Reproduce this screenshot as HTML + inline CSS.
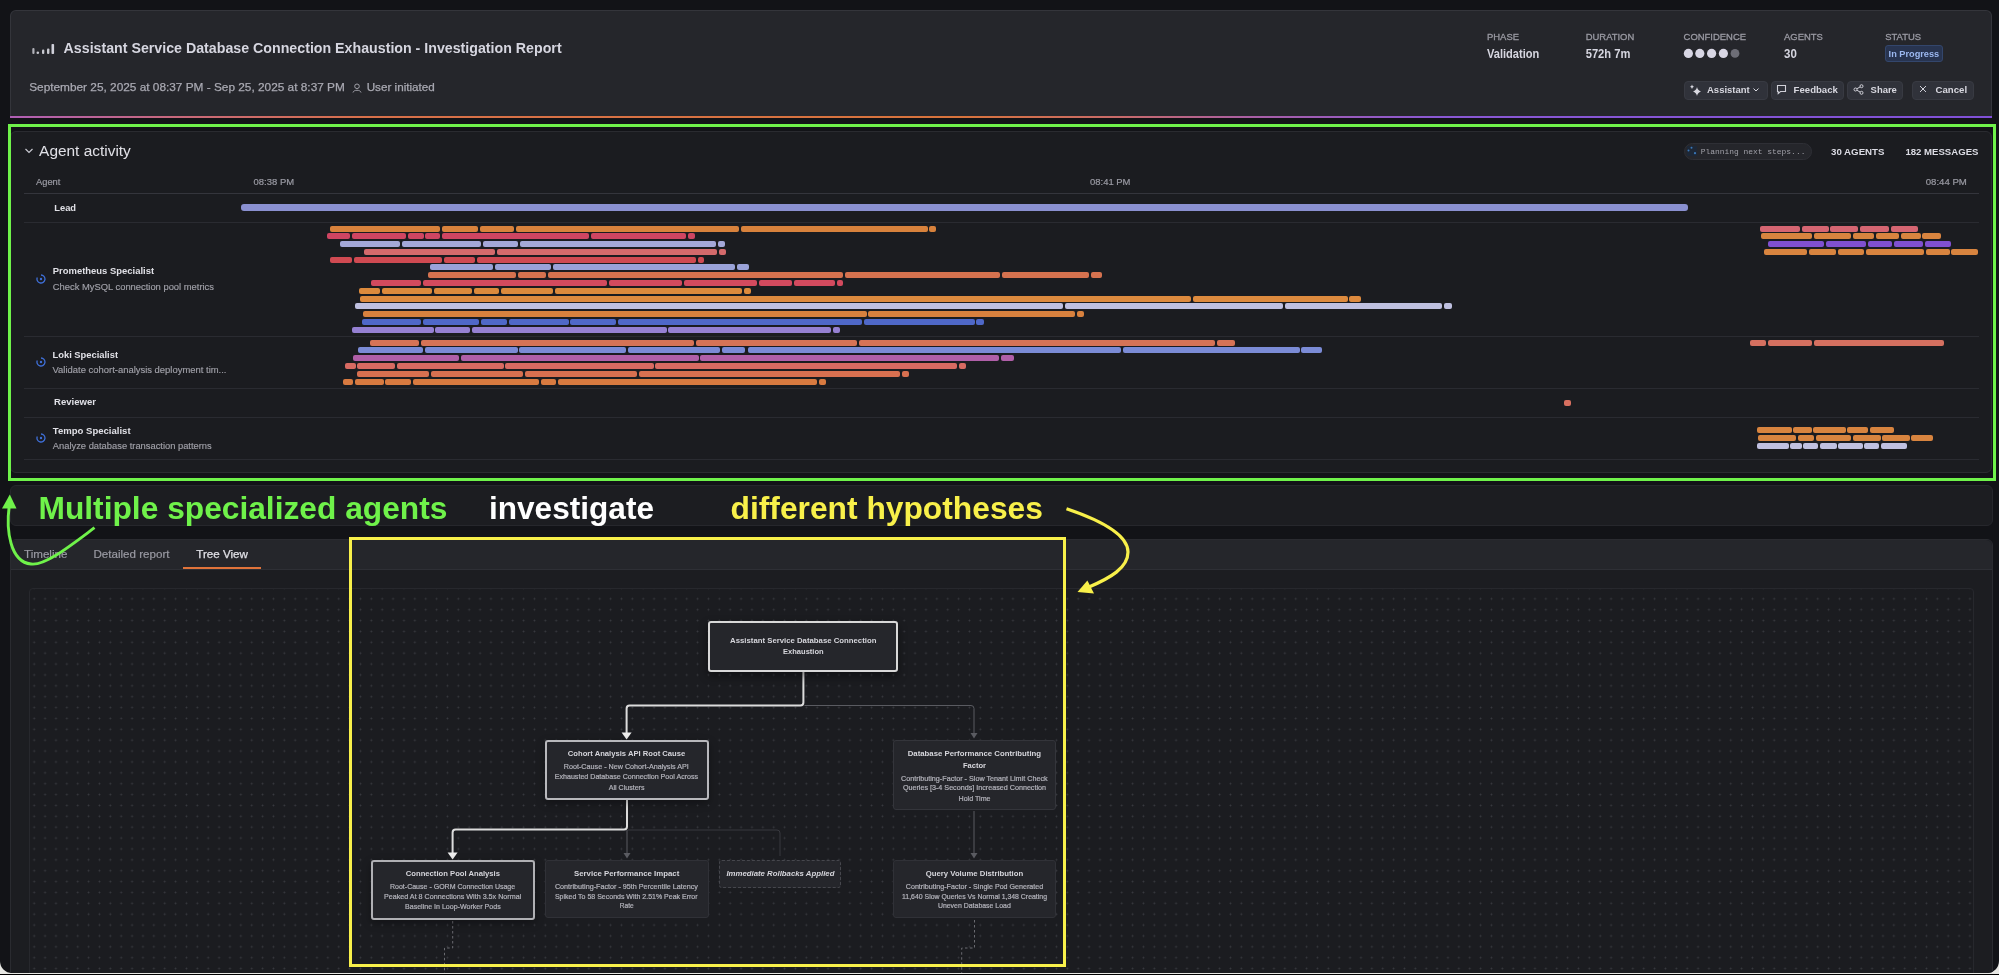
<!DOCTYPE html>
<html><head><meta charset="utf-8">
<style>
*{box-sizing:border-box;margin:0;padding:0}
html,body{width:1999px;height:975px;overflow:hidden;background:#000}
body{position:relative;font-family:"Liberation Sans",sans-serif;-webkit-font-smoothing:antialiased;}
.t{position:absolute;white-space:nowrap;line-height:1}
#txt{position:absolute;left:0;top:0;width:1999px;height:975px;will-change:transform}
#win{position:absolute;left:0;top:0;width:1999px;height:974px;background:#e8e8e4;}
#app{position:absolute;left:0;top:0;width:1999px;height:973px;background:#121317;border-radius:0 0 12px 12px;overflow:hidden}
.hdr{position:absolute;left:10px;top:10px;width:1982px;height:108px;background:#25262b;border:1px solid #34353b;border-bottom:none;border-radius:6px 6px 0 0}
.grad{position:absolute;left:10px;top:116px;width:1982px;height:2px;background:linear-gradient(90deg,#b05fb6 0%,#c8687e 8%,#d8704a 18%,#d8733c 48%,#c86a6a 56%,#a85ea8 63%,#8a58d4 72%,#8050d8 100%)}
.panel{position:absolute;background:#1b1c20;border:1px solid #2a2b30;}
#bars i{position:absolute;display:block;height:6px;border-radius:2px}
.sep{position:absolute;left:24px;width:1955px;height:1px;background:#2a2b31}
.btn{position:absolute;top:81px;height:18.5px;background:#30323a;border:1px solid #383a42;border-radius:4px}
.node{position:absolute;background:#25262b;border-radius:3px}
</style></head><body>
<div id="win"></div>
<div id="app">
  <div class="hdr"></div>
  <div class="grad"></div>
  <svg style="position:absolute;left:31px;top:42px" width="26" height="14" viewBox="0 0 26 14">
    <rect x="1.3" y="6" width="2.2" height="6" rx="1" fill="#b0b0b8"/>
    <circle cx="6.8" cy="10.8" r="1.3" fill="#c8c8d0"/>
    <rect x="11" y="7.5" width="2.3" height="4.5" rx="1" fill="#c8c8d0"/>
    <rect x="16" y="6.5" width="2.4" height="5.5" rx="1" fill="#c8c8d0"/>
    <rect x="20.5" y="2" width="2.6" height="10" rx="0.8" fill="#d0d0da"/>
  </svg>
  <svg style="position:absolute;left:352px;top:83px" width="10" height="10" viewBox="0 0 10 10"><circle cx="5" cy="3.3" r="2.3" fill="none" stroke="#a0a0a8" stroke-width="1"/><path d="M1 9.5 C1.5 6.5 8.5 6.5 9 9.5" fill="none" stroke="#a0a0a8" stroke-width="1"/></svg>
  <svg style="position:absolute;left:1683px;top:48px" width="60" height="12" viewBox="0 0 60 12">
    <circle cx="5.4" cy="5.4" r="4.6" fill="#d8d6e4"/><circle cx="16.8" cy="5.4" r="4.6" fill="#d8d6e4"/><circle cx="28.6" cy="5.4" r="4.6" fill="#d8d6e4"/><circle cx="40.4" cy="5.4" r="4.6" fill="#d8d6e4"/><circle cx="52" cy="5.4" r="4.4" fill="#6e6e77"/>
  </svg>
  <div style="position:absolute;left:1885px;top:45px;width:57.8px;height:17px;background:#283450;border:1px solid #33466c;border-radius:3px"></div>

  <div class="btn" style="left:1684px;width:83.5px"></div>
  <div class="btn" style="left:1771px;width:73px"></div>
  <div class="btn" style="left:1847px;width:56px"></div>
  <div class="btn" style="left:1912px;width:61.5px"></div>
  <svg style="position:absolute;left:1689px;top:84px" width="14" height="13" viewBox="0 0 14 13"><path d="M8 3 Q8.6 6.4 12 7.5 Q8.6 8.6 8 12 Q7.4 8.6 4 7.5 Q7.4 6.4 8 3 Z" fill="#d8d8e0"/><path d="M3 0.5 Q3.3 2.2 5 2.7 Q3.3 3.2 3 5 Q2.7 3.2 1 2.7 Q2.7 2.2 3 0.5Z" fill="#d8d8e0"/></svg>
  <svg style="position:absolute;left:1752px;top:87px" width="8" height="6" viewBox="0 0 8 6"><path d="M1.5 1.5 L4 4 L6.5 1.5" fill="none" stroke="#d8d8e0" stroke-width="1"/></svg>
  <svg style="position:absolute;left:1776px;top:84px" width="11" height="11" viewBox="0 0 11 11"><path d="M1.5 1.5 H9.5 V7.5 H4.5 L2.2 9.5 V7.5 H1.5 Z" fill="none" stroke="#d0d0d8" stroke-width="1.1"/></svg>
  <svg style="position:absolute;left:1853px;top:84px" width="11" height="11" viewBox="0 0 11 11"><circle cx="2.5" cy="5.5" r="1.5" fill="none" stroke="#d0d0d8"/><circle cx="8.5" cy="2.2" r="1.5" fill="none" stroke="#d0d0d8"/><circle cx="8.5" cy="8.8" r="1.5" fill="none" stroke="#d0d0d8"/><path d="M3.8 4.8 L7.2 2.9 M3.8 6.2 L7.2 8.1" stroke="#d0d0d8"/></svg>
  <svg style="position:absolute;left:1919px;top:85px" width="8" height="8" viewBox="0 0 8 8"><path d="M1 1 L7 7 M7 1 L1 7" stroke="#d0d0d8" stroke-width="1"/></svg>

  <div class="panel" style="left:10px;top:131px;width:1982px;height:342px;border-radius:6px"></div>
  <svg style="position:absolute;left:24px;top:147px" width="10" height="8" viewBox="0 0 10 8"><path d="M1.5 2 L5 5.5 L8.5 2" fill="none" stroke="#c8c8d0" stroke-width="1.2"/></svg>
  <div style="position:absolute;left:1684px;top:143px;width:128px;height:17px;background:#25262b;border:1px solid #2e2f35;border-radius:8.5px"></div>
  <svg style="position:absolute;left:1687px;top:146px" width="10" height="10" viewBox="0 0 10 10"><rect x="0" y="0" width="10" height="10" fill="#1d2736"/><circle cx="4.5" cy="1.8" r="1" fill="#3a78b8"/><circle cx="1.5" cy="4.5" r="1" fill="#3a78b8"/><circle cx="8" cy="7.2" r="1.1" fill="#3a78b8"/></svg>

  <div class="sep" style="top:193px;background:#34353c"></div>
  <div class="sep" style="top:222px"></div>
  <div class="sep" style="top:336px"></div>
  <div class="sep" style="top:388px"></div>
  <div class="sep" style="top:417px"></div>
  <div class="sep" style="top:459px"></div>
  <svg style="position:absolute;left:36px;top:274px" width="10" height="10" viewBox="0 0 10 10"><path d="M5 1 A4 4 0 1 1 1.3 3.4" fill="none" stroke="#3f6fd8" stroke-width="1.3"/><circle cx="5" cy="5" r="1.2" fill="#3f6fd8"/></svg>
  <svg style="position:absolute;left:36px;top:357px" width="10" height="10" viewBox="0 0 10 10"><path d="M5 1 A4 4 0 1 1 1.3 3.4" fill="none" stroke="#3f6fd8" stroke-width="1.3"/><circle cx="5" cy="5" r="1.2" fill="#3f6fd8"/></svg>
  <svg style="position:absolute;left:36px;top:433px" width="10" height="10" viewBox="0 0 10 10"><path d="M5 1 A4 4 0 1 1 1.3 3.4" fill="none" stroke="#3f6fd8" stroke-width="1.3"/><circle cx="5" cy="5" r="1.2" fill="#3f6fd8"/></svg>

  <div id="bars">
<i style="left:330px;top:225.60px;width:110px;background:#d8823c"></i>
<i style="left:442px;top:225.60px;width:36px;background:#d8823c"></i>
<i style="left:480px;top:225.60px;width:34px;background:#d8823c"></i>
<i style="left:516px;top:225.60px;width:223px;background:#d8823c"></i>
<i style="left:741px;top:225.60px;width:187px;background:#d8823c"></i>
<i style="left:929px;top:225.60px;width:7px;background:#d8823c"></i>
<i style="left:327px;top:233.37px;width:23px;background:#cf4562"></i>
<i style="left:352px;top:233.37px;width:54px;background:#cf4562"></i>
<i style="left:408px;top:233.37px;width:16px;background:#cf4562"></i>
<i style="left:425px;top:233.37px;width:15px;background:#cf4562"></i>
<i style="left:442px;top:233.37px;width:147px;background:#cf4562"></i>
<i style="left:591px;top:233.37px;width:95px;background:#cf4562"></i>
<i style="left:688px;top:233.37px;width:7px;background:#cf4562"></i>
<i style="left:340px;top:241.14px;width:60px;background:#a4a8d8"></i>
<i style="left:402px;top:241.14px;width:79px;background:#a4a8d8"></i>
<i style="left:483px;top:241.14px;width:35px;background:#a4a8d8"></i>
<i style="left:520px;top:241.14px;width:196px;background:#a4a8d8"></i>
<i style="left:718px;top:241.14px;width:7px;background:#a4a8d8"></i>
<i style="left:364px;top:248.91px;width:131px;background:#d46a6c"></i>
<i style="left:497px;top:248.91px;width:220px;background:#d46a6c"></i>
<i style="left:719px;top:248.91px;width:7px;background:#d46a6c"></i>
<i style="left:330px;top:256.68px;width:22px;background:#d04a52"></i>
<i style="left:354px;top:256.68px;width:88px;background:#d04a52"></i>
<i style="left:444px;top:256.68px;width:31px;background:#d04a52"></i>
<i style="left:477px;top:256.68px;width:219px;background:#d04a52"></i>
<i style="left:698px;top:256.68px;width:6px;background:#d04a52"></i>
<i style="left:430px;top:264.45px;width:63px;background:#9aa2d8"></i>
<i style="left:495px;top:264.45px;width:56px;background:#9aa2d8"></i>
<i style="left:553px;top:264.45px;width:182px;background:#9aa2d8"></i>
<i style="left:737px;top:264.45px;width:12px;background:#9aa2d8"></i>
<i style="left:428px;top:272.22px;width:88px;background:#d5724f"></i>
<i style="left:518px;top:272.22px;width:28px;background:#d5724f"></i>
<i style="left:548px;top:272.22px;width:295px;background:#d5724f"></i>
<i style="left:845px;top:272.22px;width:155px;background:#d5724f"></i>
<i style="left:1002px;top:272.22px;width:87px;background:#d5724f"></i>
<i style="left:1091px;top:272.22px;width:11px;background:#d5724f"></i>
<i style="left:371px;top:279.99px;width:50px;background:#d34a5e"></i>
<i style="left:423px;top:279.99px;width:184px;background:#d34a5e"></i>
<i style="left:609px;top:279.99px;width:73px;background:#d34a5e"></i>
<i style="left:684px;top:279.99px;width:73px;background:#d34a5e"></i>
<i style="left:759px;top:279.99px;width:33px;background:#d34a5e"></i>
<i style="left:794px;top:279.99px;width:41px;background:#d34a5e"></i>
<i style="left:837px;top:279.99px;width:6px;background:#d34a5e"></i>
<i style="left:359px;top:287.76px;width:21px;background:#dc8a3c"></i>
<i style="left:382px;top:287.76px;width:50px;background:#dc8a3c"></i>
<i style="left:434px;top:287.76px;width:38px;background:#dc8a3c"></i>
<i style="left:474px;top:287.76px;width:25px;background:#dc8a3c"></i>
<i style="left:501px;top:287.76px;width:52px;background:#dc8a3c"></i>
<i style="left:555px;top:287.76px;width:187px;background:#dc8a3c"></i>
<i style="left:744px;top:287.76px;width:7px;background:#dc8a3c"></i>
<i style="left:360px;top:295.53px;width:831px;background:#dd8a3e"></i>
<i style="left:1193px;top:295.53px;width:155px;background:#dd8a3e"></i>
<i style="left:1349px;top:295.53px;width:12px;background:#dd8a3e"></i>
<i style="left:355px;top:303.30px;width:708px;background:#bfc0e0"></i>
<i style="left:1065px;top:303.30px;width:218px;background:#bfc0e0"></i>
<i style="left:1285px;top:303.30px;width:157px;background:#bfc0e0"></i>
<i style="left:1444px;top:303.30px;width:8px;background:#bfc0e0"></i>
<i style="left:363px;top:311.07px;width:504px;background:#d8813e"></i>
<i style="left:868px;top:311.07px;width:207px;background:#d8813e"></i>
<i style="left:1077px;top:311.07px;width:7px;background:#d8813e"></i>
<i style="left:362px;top:318.84px;width:59px;background:#4f68c8"></i>
<i style="left:423px;top:318.84px;width:56px;background:#4f68c8"></i>
<i style="left:481px;top:318.84px;width:26px;background:#4f68c8"></i>
<i style="left:509px;top:318.84px;width:60px;background:#4f68c8"></i>
<i style="left:570px;top:318.84px;width:46px;background:#4f68c8"></i>
<i style="left:618px;top:318.84px;width:244px;background:#4f68c8"></i>
<i style="left:864px;top:318.84px;width:111px;background:#4f68c8"></i>
<i style="left:976px;top:318.84px;width:8px;background:#4f68c8"></i>
<i style="left:352px;top:326.61px;width:82px;background:#9580d2"></i>
<i style="left:435px;top:326.61px;width:35px;background:#9580d2"></i>
<i style="left:472px;top:326.61px;width:195px;background:#9580d2"></i>
<i style="left:668px;top:326.61px;width:163px;background:#9580d2"></i>
<i style="left:833px;top:326.61px;width:7px;background:#9580d2"></i>
<i style="left:1760px;top:225.60px;width:40px;background:#d56572"></i>
<i style="left:1802px;top:225.60px;width:27px;background:#d56572"></i>
<i style="left:1830px;top:225.60px;width:28px;background:#d56572"></i>
<i style="left:1860px;top:225.60px;width:29px;background:#d56572"></i>
<i style="left:1891px;top:225.60px;width:27px;background:#d56572"></i>
<i style="left:1761px;top:233.37px;width:51px;background:#d8843f"></i>
<i style="left:1814px;top:233.37px;width:37px;background:#d8843f"></i>
<i style="left:1853px;top:233.37px;width:21px;background:#d8843f"></i>
<i style="left:1876px;top:233.37px;width:23px;background:#d8843f"></i>
<i style="left:1901px;top:233.37px;width:20px;background:#d8843f"></i>
<i style="left:1922px;top:233.37px;width:19px;background:#d8843f"></i>
<i style="left:1768px;top:241.14px;width:56px;background:#8050d0"></i>
<i style="left:1826px;top:241.14px;width:40px;background:#8050d0"></i>
<i style="left:1868px;top:241.14px;width:24px;background:#8050d0"></i>
<i style="left:1894px;top:241.14px;width:29px;background:#8050d0"></i>
<i style="left:1925px;top:241.14px;width:26px;background:#8050d0"></i>
<i style="left:1764px;top:248.91px;width:43px;background:#d8843f"></i>
<i style="left:1809px;top:248.91px;width:27px;background:#d8843f"></i>
<i style="left:1838px;top:248.91px;width:26px;background:#d8843f"></i>
<i style="left:1866px;top:248.91px;width:58px;background:#d8843f"></i>
<i style="left:1926px;top:248.91px;width:24px;background:#d8843f"></i>
<i style="left:1951px;top:248.91px;width:27px;background:#d8843f"></i>
<i style="left:370px;top:339.60px;width:49px;background:#d67356"></i>
<i style="left:421px;top:339.60px;width:273px;background:#d67356"></i>
<i style="left:696px;top:339.60px;width:161px;background:#d67356"></i>
<i style="left:859px;top:339.60px;width:356px;background:#d67356"></i>
<i style="left:1217px;top:339.60px;width:18px;background:#d67356"></i>
<i style="left:358px;top:347.40px;width:65px;background:#7b8bd6"></i>
<i style="left:425px;top:347.40px;width:93px;background:#7b8bd6"></i>
<i style="left:519px;top:347.40px;width:107px;background:#7b8bd6"></i>
<i style="left:628px;top:347.40px;width:92px;background:#7b8bd6"></i>
<i style="left:722px;top:347.40px;width:23px;background:#7b8bd6"></i>
<i style="left:748px;top:347.40px;width:373px;background:#7b8bd6"></i>
<i style="left:1123px;top:347.40px;width:177px;background:#7b8bd6"></i>
<i style="left:1301px;top:347.40px;width:21px;background:#7b8bd6"></i>
<i style="left:353px;top:355.20px;width:106px;background:#b05fa8"></i>
<i style="left:461px;top:355.20px;width:238px;background:#b05fa8"></i>
<i style="left:700px;top:355.20px;width:299px;background:#b05fa8"></i>
<i style="left:1001px;top:355.20px;width:13px;background:#b05fa8"></i>
<i style="left:345px;top:363.00px;width:11px;background:#d86a62"></i>
<i style="left:357px;top:363.00px;width:38px;background:#d86a62"></i>
<i style="left:397px;top:363.00px;width:107px;background:#d86a62"></i>
<i style="left:505px;top:363.00px;width:149px;background:#d86a62"></i>
<i style="left:655px;top:363.00px;width:302px;background:#d86a62"></i>
<i style="left:959px;top:363.00px;width:7px;background:#d86a62"></i>
<i style="left:357px;top:370.80px;width:72px;background:#d87050"></i>
<i style="left:431px;top:370.80px;width:92px;background:#d87050"></i>
<i style="left:525px;top:370.80px;width:112px;background:#d87050"></i>
<i style="left:639px;top:370.80px;width:261px;background:#d87050"></i>
<i style="left:902px;top:370.80px;width:7px;background:#d87050"></i>
<i style="left:343px;top:378.60px;width:10px;background:#d87a40"></i>
<i style="left:355px;top:378.60px;width:29px;background:#d87a40"></i>
<i style="left:385px;top:378.60px;width:26px;background:#d87a40"></i>
<i style="left:413px;top:378.60px;width:126px;background:#d87a40"></i>
<i style="left:541px;top:378.60px;width:15px;background:#d87a40"></i>
<i style="left:558px;top:378.60px;width:259px;background:#d87a40"></i>
<i style="left:819px;top:378.60px;width:7px;background:#d87a40"></i>
<i style="left:1750px;top:339.60px;width:16px;background:#d57060"></i>
<i style="left:1768px;top:339.60px;width:44px;background:#d57060"></i>
<i style="left:1814px;top:339.60px;width:130px;background:#d57060"></i>
<i style="left:1757px;top:427.00px;width:35px;background:#d8843f"></i>
<i style="left:1793px;top:427.00px;width:19px;background:#d8843f"></i>
<i style="left:1813px;top:427.00px;width:33px;background:#d8843f"></i>
<i style="left:1847px;top:427.00px;width:21px;background:#d8843f"></i>
<i style="left:1870px;top:427.00px;width:24px;background:#d8843f"></i>
<i style="left:1758px;top:434.85px;width:38px;background:#d8843f"></i>
<i style="left:1798px;top:434.85px;width:16px;background:#d8843f"></i>
<i style="left:1816px;top:434.85px;width:35px;background:#d8843f"></i>
<i style="left:1853px;top:434.85px;width:28px;background:#d8843f"></i>
<i style="left:1882px;top:434.85px;width:28px;background:#d8843f"></i>
<i style="left:1911px;top:434.85px;width:22px;background:#d8843f"></i>
<i style="left:1757px;top:442.70px;width:32px;background:#c0c0e0"></i>
<i style="left:1790px;top:442.70px;width:12px;background:#c0c0e0"></i>
<i style="left:1803px;top:442.70px;width:15px;background:#c0c0e0"></i>
<i style="left:1820px;top:442.70px;width:17px;background:#c0c0e0"></i>
<i style="left:1838px;top:442.70px;width:25px;background:#c0c0e0"></i>
<i style="left:1864px;top:442.70px;width:15px;background:#c0c0e0"></i>
<i style="left:1881px;top:442.70px;width:26px;background:#c0c0e0"></i>
<i style="left:241px;top:204.4px;width:1447px;height:6.4px;background:#8a90d0;border-radius:3px"></i>
<i style="left:1564px;top:399.5px;width:7px;background:#d87060"></i>
  </div>

  <div class="panel" style="left:10px;top:485px;width:1983px;height:41px;border-radius:6px;background:#1c1d21;border-color:#26272c"></div>

  <div class="panel" style="left:10px;top:539px;width:1983px;height:450px;border-radius:6px;background:#1c1d21;border-color:#2a2b30"></div>
  <div style="position:absolute;left:11px;top:540px;width:1981px;height:30px;background:#25262b;border-bottom:1px solid #2e2f35;border-radius:6px 6px 0 0"></div>
  <div style="position:absolute;left:183.4px;top:567px;width:78px;height:2px;background:#e0733a"></div>

  <div id="canvas" style="position:absolute;left:29px;top:588px;width:1945px;height:400px;border:1px solid #27282d;border-radius:4px;background-color:#1b1c20;background-clip:padding-box;background-image:radial-gradient(circle,#393a40 0.75px,transparent 1.15px);background-size:10.88px 10.88px;background-position:-1.24px 4.4px"></div>

  <!-- tree connectors -->
  <svg style="position:absolute;left:0;top:0" width="1999" height="975" viewBox="0 0 1999 975">
    <g fill="none" stroke="#5a5b61" stroke-width="1">
      <path d="M804.5 705.5 H971 Q974 705.5 974 708.5 V734"/>
      <path d="M627 830 V854"/>
      <path d="M628 830 H777 Q780 830 780 833 V856" stroke="#38393f"/>
      <path d="M974 811 V854"/>
    </g>
    <g fill="#5a5b61">
      <path d="M970.5 733 L977.5 733 L974 738.5 Z"/>
      <path d="M623.5 853 L630.5 853 L627 858.5 Z"/>
      <path d="M970.5 853 L977.5 853 L974 858.5 Z"/>
    </g>
    <g fill="none" stroke="#dcdcdc" stroke-width="2">
      <path d="M803.4 672 V702.6 Q803.4 705.6 800.4 705.6 H629.6 Q626.6 705.6 626.6 708.6 V733"/>
      <path d="M627 800 V826.6 Q627 829.6 624 829.6 H455.6 Q452.6 829.6 452.6 832.6 V853"/>
    </g>
    <g fill="#eeeeee">
      <path d="M621.6 732.5 L631.6 732.5 L626.6 739.5 Z"/>
      <path d="M447.6 852.5 L457.6 852.5 L452.6 859.5 Z"/>
    </g>
    <g fill="none" stroke="#6a6b70" stroke-width="1" stroke-dasharray="2.5 2.5">
      <path d="M452.7 921 V948 H444.5 V975"/>
      <path d="M974.5 920 V948 H961.7 V975"/>
    </g>
  </svg>
  <div class="node" style="left:708.2px;top:620.8px;width:190.3px;height:51px;border:2px solid #d8d8d8;box-shadow:0 4px 10px rgba(0,0,0,.45)"></div>
  <div class="node" style="left:545px;top:740.3px;width:163.6px;height:59.5px;border:2px solid #b8b8bc;box-shadow:0 3px 8px rgba(0,0,0,.35)"></div>
  <div class="node" style="left:893px;top:740.3px;width:163px;height:70.2px;border:1px solid #34353b"></div>
  <div class="node" style="left:371px;top:860.3px;width:163.6px;height:59.5px;border:2px solid #b0b0b4;box-shadow:0 3px 8px rgba(0,0,0,.35)"></div>
  <div class="node" style="left:545px;top:860.3px;width:163.5px;height:58.2px;border:1px solid #303137"></div>
  <div class="node" style="left:719px;top:860px;width:122px;height:27.5px;border:1px dashed #46474d"></div>
  <div class="node" style="left:893px;top:860.3px;width:163px;height:58.2px;border:1px solid #303137"></div>

<div id="txt">
<div class="t" style="left:63.60px;top:41px;font-size:14.214px;color:#d6d6e0;font-weight:bold;transform:translateY(-0.20px) scaleY(1.070);transform-origin:0 12px;">Assistant Service Database Connection Exhaustion - Investigation Report</div>
<div class="t" style="left:29.20px;top:82px;font-size:11.838px;color:#a9a9b2;-webkit-text-stroke:0.25px #a9a9b2;transform:translateY(0.20px) scaleY(1.000);transform-origin:0 9px;">September 25, 2025 at 08:37 PM - Sep 25, 2025 at 8:37 PM</div>
<div class="t" style="left:366.70px;top:81px;font-size:11.686px;color:#a9a9b2;-webkit-text-stroke:0.25px #a9a9b2;transform:translateY(0.20px) scaleY(1.000);transform-origin:0 10px;">User initiated</div>
<div class="t" style="left:1487.00px;top:32px;font-size:9.450px;color:#9a9aa3;-webkit-text-stroke:0.3px #9a9aa3;">PHASE</div>
<div class="t" style="left:1585.70px;top:32px;font-size:9.450px;color:#9a9aa3;-webkit-text-stroke:0.3px #9a9aa3;">DURATION</div>
<div class="t" style="left:1683.60px;top:32px;font-size:9.450px;color:#9a9aa3;-webkit-text-stroke:0.3px #9a9aa3;">CONFIDENCE</div>
<div class="t" style="left:1784.00px;top:32px;font-size:9.450px;color:#9a9aa3;-webkit-text-stroke:0.3px #9a9aa3;">AGENTS</div>
<div class="t" style="left:1885.20px;top:32px;font-size:9.450px;color:#9a9aa3;-webkit-text-stroke:0.3px #9a9aa3;">STATUS</div>
<div class="t" style="left:1487.00px;top:49px;font-size:11.094px;color:#d6d6e0;font-weight:bold;transform:translateY(-0.20px) scaleY(1.100);transform-origin:0 9px;">Validation</div>
<div class="t" style="left:1585.70px;top:49px;font-size:11.168px;color:#d6d6e0;font-weight:bold;transform:translateY(-0.20px) scaleY(1.100);transform-origin:0 9px;">572h 7m</div>
<div class="t" style="left:1784.00px;top:49px;font-size:11.500px;color:#d6d6e0;font-weight:bold;transform:translateY(-0.40px) scaleY(1.050);transform-origin:0 9px;">30</div>
<div class="t" style="left:1888.60px;top:50px;font-size:9.215px;color:#9cb8f0;font-weight:bold;">In Progress</div>
<div class="t" style="left:1707.00px;top:85px;font-size:9.500px;color:#d8d8e0;font-weight:bold;">Assistant</div>
<div class="t" style="left:1793.60px;top:85px;font-size:9.602px;color:#d8d8e0;font-weight:bold;">Feedback</div>
<div class="t" style="left:1870.60px;top:85px;font-size:9.463px;color:#d8d8e0;font-weight:bold;">Share</div>
<div class="t" style="left:1935.60px;top:85px;font-size:9.605px;color:#d8d8e0;font-weight:bold;">Cancel</div>
<div class="t" style="left:39.10px;top:143px;font-size:15.435px;color:#e0e0e6;transform:translateY(0.40px) scaleY(1.000);transform-origin:0 13px;">Agent activity</div>
<div class="t" style="left:1700.80px;top:148px;font-size:7.938px;color:#a0a0a8;font-family:'Liberation Mono',monospace;">Planning next steps...</div>
<div class="t" style="left:1831.00px;top:147px;font-size:9.700px;color:#dcdce4;font-weight:bold;transform:translateY(0.30px) scaleY(1.000);transform-origin:0 8px;">30 AGENTS</div>
<div class="t" style="left:1905.40px;top:147px;font-size:9.613px;color:#dcdce4;font-weight:bold;transform:translateY(0.30px) scaleY(1.000);transform-origin:0 8px;">182 MESSAGES</div>
<div class="t" style="left:36.00px;top:178px;font-size:9.337px;color:#9a9aa3;-webkit-text-stroke:0.2px #9a9aa3;">Agent</div>
<div class="t" style="left:253.60px;top:177px;font-size:9.462px;color:#9a9aa3;-webkit-text-stroke:0.2px #9a9aa3;">08:38 PM</div>
<div class="t" style="left:1090.00px;top:177px;font-size:9.462px;color:#9a9aa3;-webkit-text-stroke:0.2px #9a9aa3;">08:41 PM</div>
<div class="t" style="left:1925.70px;top:177px;font-size:9.625px;color:#9a9aa3;-webkit-text-stroke:0.2px #9a9aa3;">08:44 PM</div>
<div class="t" style="left:54.30px;top:204px;font-size:9.340px;color:#e0e0e6;font-weight:bold;transform:translateY(0.30px) scaleY(1.000);transform-origin:0 7px;">Lead</div>
<div class="t" style="left:52.80px;top:266px;font-size:9.453px;color:#e0e0e6;font-weight:bold;">Prometheus Specialist</div>
<div class="t" style="left:52.80px;top:283px;font-size:9.388px;color:#a0a0a8;-webkit-text-stroke:0.15px #a0a0a8;">Check MySQL connection pool metrics</div>
<div class="t" style="left:52.50px;top:351px;font-size:9.368px;color:#e0e0e6;font-weight:bold;transform:translateY(-0.50px) scaleY(1.000);transform-origin:0 7px;">Loki Specialist</div>
<div class="t" style="left:52.50px;top:365px;font-size:9.449px;color:#a0a0a8;-webkit-text-stroke:0.15px #a0a0a8;transform:translateY(-0.30px) scaleY(1.000);transform-origin:0 8px;">Validate cohort-analysis deployment tim...</div>
<div class="t" style="left:54.10px;top:397px;font-size:9.541px;color:#e0e0e6;font-weight:bold;">Reviewer</div>
<div class="t" style="left:52.80px;top:426px;font-size:9.558px;color:#e0e0e6;font-weight:bold;">Tempo Specialist</div>
<div class="t" style="left:52.80px;top:442px;font-size:9.359px;color:#a0a0a8;-webkit-text-stroke:0.15px #a0a0a8;transform:translateY(-0.40px) scaleY(1.000);transform-origin:0 7px;">Analyze database transaction patterns</div>
<div class="t" style="left:24.00px;top:548px;font-size:11.625px;color:#9a9aa3;-webkit-text-stroke:0.2px #9a9aa3;transform:translateY(-0.30px) scaleY(1.000);transform-origin:0 10px;">Timeline</div>
<div class="t" style="left:93.40px;top:548px;font-size:11.620px;color:#9a9aa3;-webkit-text-stroke:0.2px #9a9aa3;transform:translateY(-0.30px) scaleY(1.000);transform-origin:0 10px;">Detailed report</div>
<div class="t" style="left:196.30px;top:548px;font-size:11.605px;color:#e0e0e6;-webkit-text-stroke:0.25px #e0e0e6;transform:translateY(-0.30px) scaleY(1.000);transform-origin:0 10px;">Tree View</div>
<div class="t" style="left:730.10px;top:637px;font-size:7.786px;color:#d6d6dc;font-weight:bold;transform:translateY(-0.50px) scaleY(1.000);transform-origin:0 6px;">Assistant Service Database Connection</div>
<div class="t" style="left:783.00px;top:648px;font-size:7.551px;color:#d6d6dc;font-weight:bold;">Exhaustion</div>
<div class="t" style="left:567.80px;top:750px;font-size:7.656px;color:#d6d6dc;font-weight:bold;">Cohort Analysis API Root Cause</div>
<div class="t" style="left:563.80px;top:763px;font-size:7.197px;color:#b4b4bc;-webkit-text-stroke:0.2px #b4b4bc;">Root-Cause - New Cohort-Analysis API</div>
<div class="t" style="left:554.70px;top:774px;font-size:7.116px;color:#b4b4bc;-webkit-text-stroke:0.2px #b4b4bc;transform:translateY(0.20px) scaleY(1.000);transform-origin:0 5px;">Exhausted Database Connection Pool Across</div>
<div class="t" style="left:608.70px;top:785px;font-size:7.099px;color:#b4b4bc;-webkit-text-stroke:0.2px #b4b4bc;transform:translateY(-0.30px) scaleY(1.000);transform-origin:0 5px;">All Clusters</div>
<div class="t" style="left:907.70px;top:750px;font-size:7.812px;color:#d6d6dc;font-weight:bold;">Database Performance Contributing</div>
<div class="t" style="left:962.90px;top:762px;font-size:7.591px;color:#d6d6dc;font-weight:bold;transform:translateY(-0.40px) scaleY(1.000);transform-origin:0 6px;">Factor</div>
<div class="t" style="left:901.10px;top:775px;font-size:7.198px;color:#b4b4bc;-webkit-text-stroke:0.2px #b4b4bc;transform:translateY(-0.50px) scaleY(1.000);transform-origin:0 6px;">Contributing-Factor - Slow Tenant Limit Check</div>
<div class="t" style="left:902.90px;top:785px;font-size:7.186px;color:#b4b4bc;-webkit-text-stroke:0.2px #b4b4bc;transform:translateY(-0.20px) scaleY(1.000);transform-origin:0 6px;">Queries [3-4 Seconds] Increased Connection</div>
<div class="t" style="left:958.50px;top:796px;font-size:7.131px;color:#b4b4bc;-webkit-text-stroke:0.2px #b4b4bc;transform:translateY(-0.30px) scaleY(1.000);transform-origin:0 5px;">Hold Time</div>
<div class="t" style="left:405.80px;top:870px;font-size:7.660px;color:#d6d6dc;font-weight:bold;">Connection Pool Analysis</div>
<div class="t" style="left:390.00px;top:883px;font-size:7.023px;color:#b4b4bc;-webkit-text-stroke:0.2px #b4b4bc;transform:translateY(-0.30px) scaleY(1.000);transform-origin:0 6px;">Root-Cause - GORM Connection Usage</div>
<div class="t" style="left:384.00px;top:894px;font-size:7.165px;color:#b4b4bc;-webkit-text-stroke:0.2px #b4b4bc;transform:translateY(-0.20px) scaleY(1.000);transform-origin:0 5px;">Peaked At 8 Connections With 3.5x Normal</div>
<div class="t" style="left:405.00px;top:903px;font-size:7.073px;color:#b4b4bc;-webkit-text-stroke:0.2px #b4b4bc;transform:translateY(-0.40px) scaleY(1.000);transform-origin:0 6px;">Baseline In Loop-Worker Pods</div>
<div class="t" style="left:574.00px;top:870px;font-size:7.836px;color:#d6d6dc;font-weight:bold;transform:translateY(-0.40px) scaleY(1.000);transform-origin:0 6px;">Service Performance Impact</div>
<div class="t" style="left:554.90px;top:883px;font-size:7.206px;color:#b4b4bc;-webkit-text-stroke:0.2px #b4b4bc;transform:translateY(-0.50px) scaleY(1.000);transform-origin:0 6px;">Contributing-Factor - 95th Percentile Latency</div>
<div class="t" style="left:554.90px;top:893px;font-size:7.001px;color:#b4b4bc;-webkit-text-stroke:0.2px #b4b4bc;transform:translateY(-0.50px) scaleY(1.000);transform-origin:0 6px;">Spiked To 58 Seconds With 2.51% Peak Error</div>
<div class="t" style="left:619.70px;top:903px;font-size:6.628px;color:#b4b4bc;-webkit-text-stroke:0.2px #b4b4bc;transform:translateY(0.40px) scaleY(1.000);transform-origin:0 5px;">Rate</div>
<div class="t" style="left:925.80px;top:870px;font-size:7.742px;color:#d6d6dc;font-weight:bold;transform:translateY(-0.40px) scaleY(1.000);transform-origin:0 6px;">Query Volume Distribution</div>
<div class="t" style="left:905.80px;top:884px;font-size:7.134px;color:#b4b4bc;-webkit-text-stroke:0.2px #b4b4bc;transform:translateY(-0.50px) scaleY(1.000);transform-origin:0 5px;">Contributing-Factor - Single Pod Generated</div>
<div class="t" style="left:902.00px;top:894px;font-size:6.926px;color:#b4b4bc;-webkit-text-stroke:0.2px #b4b4bc;transform:translateY(-0.50px) scaleY(1.000);transform-origin:0 5px;">11,640 Slow Queries Vs Normal 1,348 Creating</div>
<div class="t" style="left:937.90px;top:903px;font-size:6.957px;color:#b4b4bc;-webkit-text-stroke:0.2px #b4b4bc;transform:translateY(0.40px) scaleY(1.000);transform-origin:0 5px;">Uneven Database Load</div>
<div class="t" style="left:726.40px;top:870px;font-size:7.802px;color:#d6d6dc;font-weight:bold;font-style:italic;transform:translateY(-0.50px) scaleY(1.000);transform-origin:0 6px;">Immediate Rollbacks Applied</div>
</div>

  <!-- annotations -->
  <div style="position:absolute;left:7.7px;top:124px;width:1988px;height:357px;border:3.4px solid #6ff24a"></div>
<div class="t" style="left:38.50px;top:493px;font-size:31.724px;color:#6ff24a;font-weight:bold;">Multiple specialized agents</div>
<div class="t" style="left:489.00px;top:493px;font-size:31.583px;color:#ffffff;font-weight:bold;">investigate</div>
<div class="t" style="left:730.50px;top:493px;font-size:31.773px;color:#f8f04a;font-weight:bold;transform:translateY(0.20px) scaleY(1.000);transform-origin:0 26px;">different hypotheses</div>
  <div style="position:absolute;left:349px;top:537px;width:717px;height:430px;border:3.4px solid #f8f04a"></div>
  <svg style="position:absolute;left:0;top:480px" width="140" height="100" viewBox="0 0 140 100">
    <path d="M94.5 47.7 C70 66 45 86 31 84 C10 82 6 50 9.2 26" fill="none" stroke="#6ff24a" stroke-width="2.9"/>
    <path d="M9.8 14.5 L2 28.5 L16.5 28.5 Z" fill="#6ff24a"/>
  </svg>
  <svg style="position:absolute;left:1040px;top:490px" width="120" height="120" viewBox="0 0 120 120">
    <path d="M26.5 18.7 C60 30 88 45 88 62 C88 78 70 88 49 97" fill="none" stroke="#f8f04a" stroke-width="3.2"/>
    <path d="M37.5 102 L47.4 90.5 L54 103.4 Z" fill="#f8f04a"/>
  </svg>
</div>
</body></html>
